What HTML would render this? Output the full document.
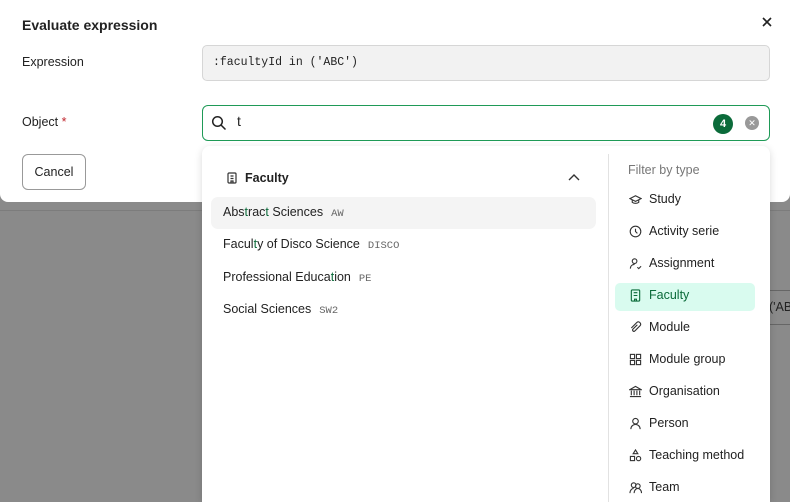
<!DOCTYPE html>
<html><head><style>
*{box-sizing:border-box;margin:0;padding:0}
html,body{width:790px;height:502px;overflow:hidden}
body{background:#8a8a8a;font-family:"Liberation Sans",sans-serif;color:#222;position:relative;font-size:12.5px}
.abs{position:absolute}
.modal{left:0;top:0;width:790px;height:202px;background:#fff;border-radius:0 0 8px 8px}
.mono{font-family:"Liberation Mono",monospace}
.dd{left:202px;top:146px;width:568px;height:356px;background:#fff;border-radius:8px 8px 0 0;box-shadow:0 2px 8px rgba(0,0,0,.15)}
.item{position:absolute;left:21px;font-size:12.5px}
.code{font-family:"Liberation Mono",monospace;font-size:10.5px;color:#666;margin-left:8px}
.g{color:#0b6b3a}
.f{position:absolute;left:427px;font-size:12.5px;color:#222;display:flex;align-items:center}
.f svg{width:13px;height:13px;margin-right:7px;fill:none;stroke:#333;stroke-width:1.2}
</style></head><body>
<div class="abs" style="left:0;top:210px;width:790px;height:1px;background:#7c7c7c"></div>
<div class="abs" style="left:770px;top:290px;width:20px;height:1px;background:#666"></div>
<div class="abs" style="left:770px;top:324px;width:20px;height:1px;background:#666"></div>
<div class="abs" style="left:769px;top:300px;font-size:12.5px;color:#222">('ABC</div>
<div class="abs modal">
<div class="abs" style="left:22px;top:17px;font-size:14px;font-weight:bold">Evaluate expression</div>
<svg class="abs" style="left:762px;top:17px" width="10" height="10" viewBox="0 0 10 10" stroke="#222" stroke-width="1.6"><path d="M1 1l8 8M9 1l-8 8"/></svg>
<div class="abs" style="left:22px;top:55px">Expression</div>
<div class="abs mono" style="left:202px;top:45px;width:568px;height:36px;background:#f2f2f2;border:1px solid #d6d6d6;border-radius:5px;padding:10px 10px;font-size:11.5px">:facultyId in ('ABC')</div>
<div class="abs" style="left:22px;top:115px">Object <span style="color:#c0262d">*</span></div>
<div class="abs" style="left:202px;top:105px;width:568px;height:36px;border:1px solid #1f9a57;border-radius:6px"></div>
<svg class="abs" style="left:211px;top:115px" width="16" height="16" viewBox="0 0 16 16" fill="none" stroke="#222" stroke-width="1.5"><circle cx="6.5" cy="6.5" r="4.8"/><path d="M10 10l4.5 4.5"/></svg>
<div class="abs" style="left:237px;top:113px;font-size:14px">t</div>
<div class="abs" style="left:713px;top:114px;width:20px;height:20px;border-radius:10px;background:#0b6b3a;color:#fff;font-weight:bold;font-size:11px;text-align:center;line-height:20px">4</div>
<div class="abs" style="left:745px;top:116px;width:14px;height:14px;border-radius:7px;background:#999;color:#fff;font-size:9px;text-align:center;line-height:14px">✕</div>
<div class="abs" style="left:22px;top:154px;width:64px;height:36px;border:1px solid #999;border-radius:6px;text-align:center;line-height:34px">Cancel</div>
</div>
<div class="abs dd">
<svg class="abs" style="left:25px;top:26px" width="10" height="12" viewBox="0 0 10 12" fill="none" stroke="#333" stroke-width="1.2"><rect x="1" y="1" width="8" height="10" rx="1"/><path d="M3.5 4h3M3.5 6.5h3M4 11v-2h2v2"/></svg>
<div class="abs" style="left:43px;top:25px;font-weight:bold;font-size:12.5px">Faculty</div>
<svg class="abs" style="left:366px;top:27px" width="12" height="8" viewBox="0 0 12 8" fill="none" stroke="#333" stroke-width="1.4"><path d="M1 7l5-5 5 5"/></svg>
<div class="abs" style="left:9px;top:51px;width:385px;height:32px;background:#f4f4f4;border-radius:7px"></div>
<div class="item" style="top:59px">Abs<span class="g">t</span>rac<span class="g">t</span> Sciences<span class="code">AW</span></div>
<div class="item" style="top:91px">Facul<span class="g">t</span>y of Disco Science<span class="code">DISCO</span></div>
<div class="item" style="top:124px">Professional Educa<span class="g">t</span>ion<span class="code">PE</span></div>
<div class="item" style="top:156px">Social Sciences<span class="code">SW2</span></div>
<div class="abs" style="left:406px;top:8px;width:1px;height:360px;background:#e2e2e2"></div>
<div class="abs" style="left:426px;top:17px;color:#777">Filter by type</div>
<div class="abs" style="left:413px;top:137px;width:140px;height:28px;background:#d9fbef;border-radius:5px"></div>
<div class="f" style="top:46px"><svg viewBox="0 0 14 14"><path d="M1 6l6-3 6 3-6 3z"/><path d="M3.5 7.5v2.5c2 1.5 5 1.5 7 0V7.5"/></svg>Study</div>
<div class="f" style="top:78px"><svg viewBox="0 0 14 14"><circle cx="7" cy="7" r="5.7"/><path d="M7 4v3l2 2"/></svg>Activity serie</div>
<div class="f" style="top:110px"><svg viewBox="0 0 14 14"><circle cx="6" cy="4.5" r="2.5"/><path d="M1.5 12.5c0-3 2-4.5 4.5-4.5M9 11l1.5 1.5L13 10"/></svg>Assignment</div>
<div class="f g" style="top:142px"><svg viewBox="0 0 14 14" style="stroke:#0b6b3a"><rect x="2.5" y="1" width="9" height="12" rx="1"/><path d="M5 4h4M5 7h4M6 13v-2h2v2"/></svg><span class="g">Faculty</span></div>
<div class="f" style="top:174px"><svg viewBox="0 0 14 14"><path d="M9 4l-5 5a1.5 1.5 0 002 2l6-6a2.5 2.5 0 00-3.5-3.5L2.5 7.5"/></svg>Module</div>
<div class="f" style="top:206px"><svg viewBox="0 0 14 14"><rect x="1.5" y="1.5" width="4.5" height="4.5"/><rect x="8" y="1.5" width="4.5" height="4.5"/><rect x="1.5" y="8" width="4.5" height="4.5"/><rect x="8" y="8" width="4.5" height="4.5"/></svg>Module group</div>
<div class="f" style="top:238px"><svg viewBox="0 0 14 14"><path d="M1 5l6-3.5L13 5zM2.5 6v5M5.5 6v5M8.5 6v5M11.5 6v5M1 12.5h12"/></svg>Organisation</div>
<div class="f" style="top:270px"><svg viewBox="0 0 14 14"><circle cx="7" cy="4.5" r="3"/><path d="M2 13c0-3 2.5-5 5-5s5 2 5 5"/></svg>Person</div>
<div class="f" style="top:302px"><svg viewBox="0 0 14 14"><path d="M7 1l2.5 4h-5z"/><rect x="1.5" y="8" width="4.5" height="4.5"/><circle cx="10.3" cy="10.3" r="2.3"/></svg>Teaching method</div>
<div class="f" style="top:334px"><svg viewBox="0 0 14 14"><circle cx="5" cy="4.5" r="2.5"/><circle cx="9.5" cy="5.5" r="2.5"/><path d="M1 13c0-3 2-5 4-5M5.5 13c0-3 2-5 4-5s4 2 4 5"/></svg>Team</div>
</div>
</body></html>
